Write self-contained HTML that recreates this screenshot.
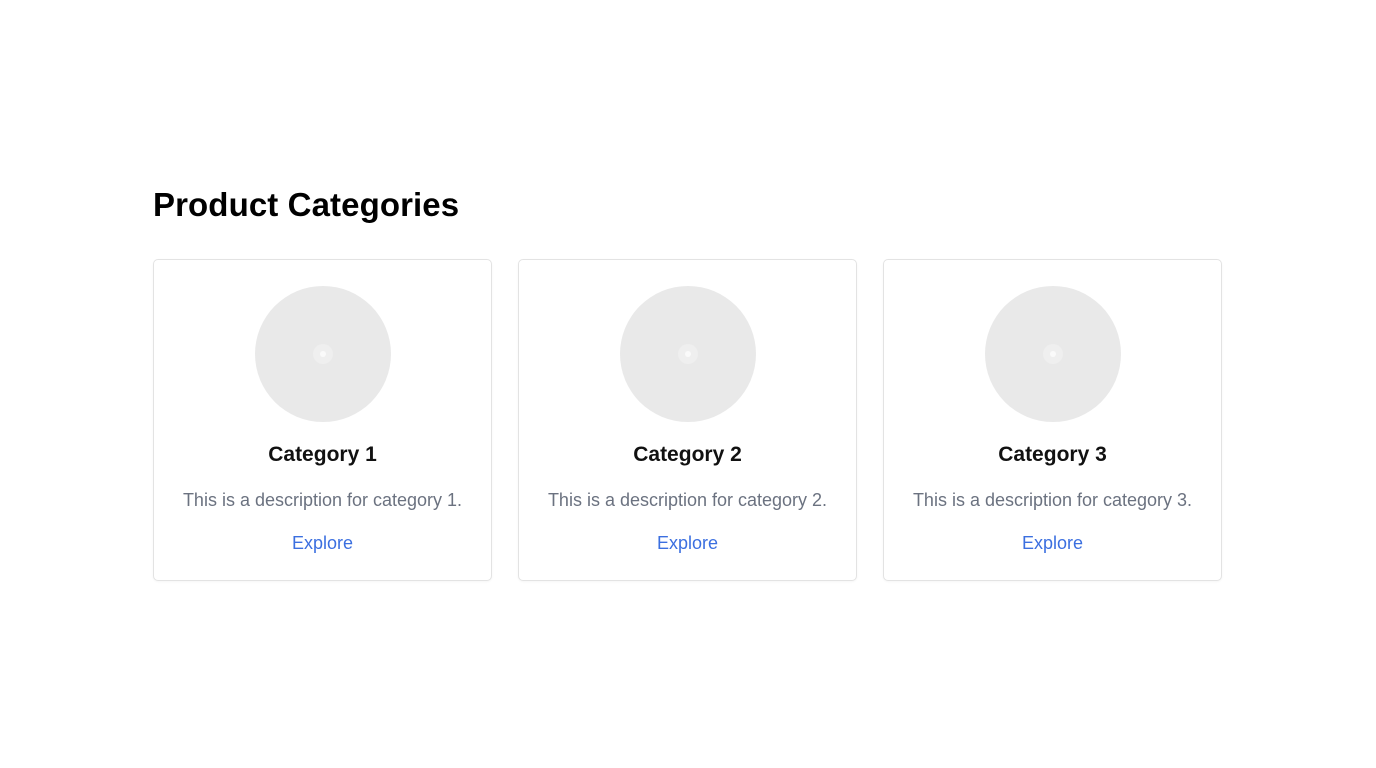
<!DOCTYPE html>
<html><head><style>
body{margin:0;background:#fff;font-family:"Liberation Sans",sans-serif;}
h2{position:absolute;left:153px;top:185px;margin:0;font-size:33px;font-weight:bold;color:#000;line-height:40px;letter-spacing:0.1px;}
.card{position:absolute;top:259px;width:337px;height:320px;border:1px solid #e3e3e3;border-radius:5px;box-shadow:0 1px 2px rgba(0,0,0,0.04);text-align:center;}
.c{width:136px;height:136px;border-radius:50%;background:#e9e9e9;margin:26px auto 0;position:relative;}
.c::after{content:"";position:absolute;left:58px;top:58px;width:20px;height:20px;border-radius:50%;background:#efefef;}
.c::before{content:"";position:absolute;left:65px;top:65px;width:6px;height:6px;border-radius:50%;background:#fafafa;z-index:1;}
.t{margin-top:20px;font-size:21px;font-weight:bold;color:#111;line-height:26px;}
.d{margin-top:21px;font-size:18px;color:#6b7280;line-height:22px;}
.e{margin-top:21px;font-size:18px;color:#3b6fe0;line-height:22px;}
</style></head><body>
<h2>Product Categories</h2>
<div class="card" style="left:153px"><div class="c"></div><div class="t">Category 1</div><div class="d">This is a description for category 1.</div><div class="e">Explore</div></div>
<div class="card" style="left:518px"><div class="c"></div><div class="t">Category 2</div><div class="d">This is a description for category 2.</div><div class="e">Explore</div></div>
<div class="card" style="left:883px"><div class="c"></div><div class="t">Category 3</div><div class="d">This is a description for category 3.</div><div class="e">Explore</div></div>
</body></html>
